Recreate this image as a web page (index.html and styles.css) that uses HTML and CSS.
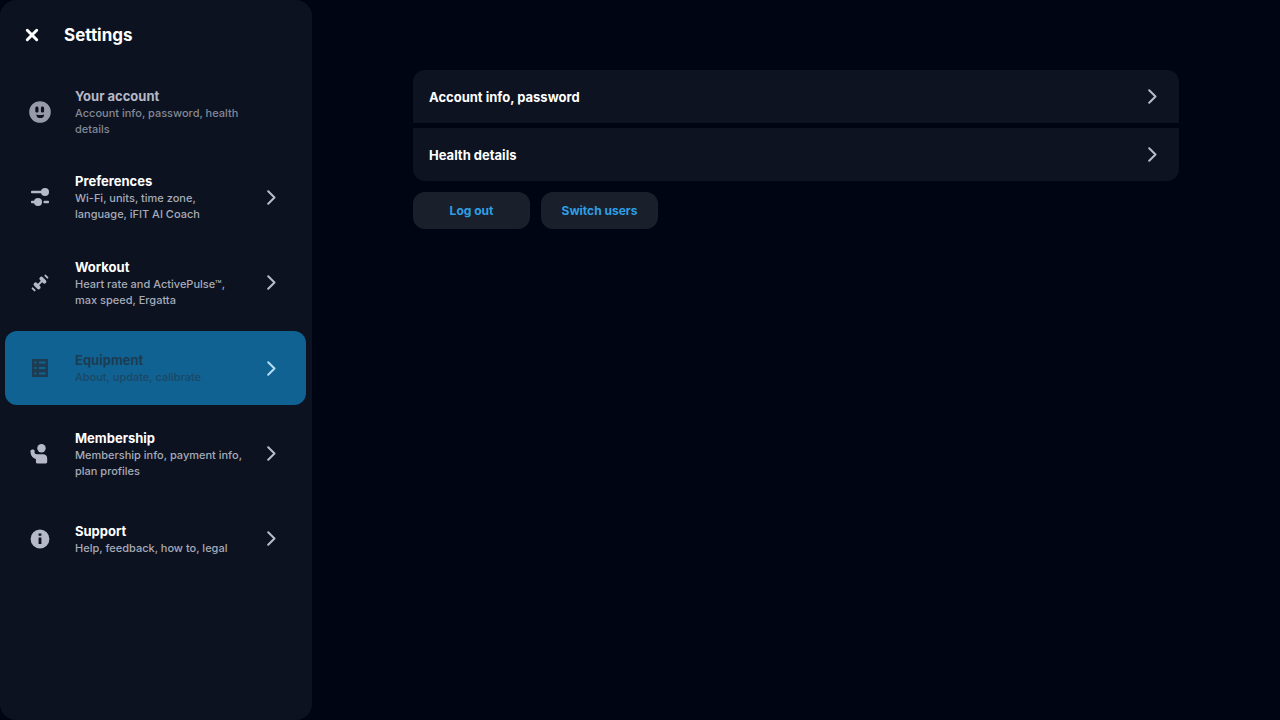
FILE: index.html
```html
<!DOCTYPE html>
<html lang="en">
<head>
<meta charset="utf-8">
<meta name="viewport" content="width=device-width, initial-scale=1">
<title>Settings</title>
<link rel="stylesheet" href="styles.css">
</head>
<body>
<div class="app">
  <aside class="sidebar">
    <header class="sidebar-header">
      <button class="close" type="button" aria-label="Close">
        <svg width="14" height="14" viewBox="0 0 14 14"><path d="M2.3 2.3 11.7 11.7M11.7 2.3 2.3 11.7" fill="none" stroke="currentColor" stroke-width="3" stroke-linecap="round"/></svg>
      </button>
      <h1 class="title">Settings</h1>
    </header>
    <nav class="menu">
      <a class="item item-current" href="#account" aria-current="page">
        <svg class="icon" viewBox="0 0 24 24"><path fill="currentColor" fill-rule="evenodd" d="M12 1.2a10.8 10.8 0 1 0 0 21.6 10.8 10.8 0 0 0 0-21.6ZM8.9 6.6c.9 0 1.6.7 1.6 1.600v2.800c0 .9-.7 1.600-1.600 1.600s-1.600-.7-1.600-1.600V8.200c0-.9.7-1.600 1.600-1.600Zm5.600 0c.9 0 1.600.7 1.600 1.600v2.800c0 .9-.7 1.600-1.600 1.600s-1.600-.7-1.600-1.600V8.200c0-.9.7-1.600 1.600-1.600ZM8.400 14.400c2.400.8 5.200.8 7.700 0 .2 2.300-1.500 3.700-3.800 3.700s-4.100-1.400-3.900-3.700Z"/></svg>
        <span class="text"><span class="name">Your account</span><span class="note">Account info, password, health details</span></span>
      </a>
      <a class="item" href="#preferences">
        <svg class="icon" viewBox="0 0 24 24"><g fill="currentColor"><rect x="3" y="5.700" width="13" height="2.600" rx=".8"/><circle cx="17" cy="7" r="4"/><rect x="3" y="15.700" width="8" height="2.600" rx=".8"/><circle cx="10" cy="17" r="4"/><rect x="15.500" y="15.700" width="5.500" height="2.600" rx=".8"/></g></svg>
        <span class="text"><span class="name">Preferences</span><span class="note">Wi-Fi, units, time zone, language, iFIT AI Coach</span></span>
        <svg class="chevron" viewBox="0 0 9 15"><path d="M1.200 1.200 7.500 7.500 1.200 13.800"/></svg>
      </a>
      <a class="item" href="#workout">
        <svg class="icon" viewBox="0 0 24 24"><g fill="none" stroke="currentColor" stroke-linecap="round"><path stroke-width="1.800" d="M9 15 15 9"/><path stroke-width="4" d="m7.600 13.400 3 3M13.400 7.600l3 3"/><path stroke-width="2" d="m4.600 17.400 2 2M17.400 4.600l2 2"/></g></svg>
        <span class="text"><span class="name">Workout</span><span class="note">Heart rate and ActivePulse™, max speed, Ergatta</span></span>
        <svg class="chevron" viewBox="0 0 9 15"><path d="M1.200 1.200 7.500 7.500 1.200 13.800"/></svg>
      </a>
      <a class="item item-pressed" href="#equipment">
        <svg class="icon" viewBox="0 0 24 24"><path fill="currentColor" fill-rule="evenodd" d="M4 3h16v18H4ZM6.500 5.500v2h2v-2Zm4.500 0v2h6.500v-2ZM6.500 11v2h2v-2Zm4.500 0v2h6.500v-2ZM6.500 16.500v2h2v-2Zm4.500 0v2h6.500v-2Z"/></svg>
        <span class="text"><span class="name">Equipment</span><span class="note">About, update, calibrate</span></span>
        <svg class="chevron" viewBox="0 0 9 15"><path d="M1.200 1.200 7.500 7.500 1.200 13.800"/></svg>
      </a>
      <a class="item" href="#membership">
        <svg class="icon" viewBox="0 0 24 24"><g fill="currentColor"><circle cx="13.500" cy="6.200" r="4.200"/><path d="M2.500 9.300c0-1.100.7-1.800 1.700-1.800h1c1 0 1.600.8 1.400 1.700-.4 1.800.5 3.100 2.400 3.100H15c2.300 0 4.200 1.600 4.200 3.900v3.900c0 .8-.6 1.300-1.300 1.300H9.200c-.8 0-1.300-.6-1.300-1.300v-3C4 15.800 2.500 13 2.500 9.300Z"/></g></svg>
        <span class="text"><span class="name">Membership</span><span class="note">Membership info, payment info, plan profiles</span></span>
        <svg class="chevron" viewBox="0 0 9 15"><path d="M1.200 1.200 7.500 7.500 1.200 13.800"/></svg>
      </a>
      <a class="item" href="#support">
        <svg class="icon" viewBox="0 0 24 24"><path fill="currentColor" fill-rule="evenodd" d="M12 2.600a9.400 9.400 0 1 0 0 18.800 9.400 9.400 0 0 0 0-18.800ZM10.600 6.500h2.800v2.300h-2.800Zm0 4h2.800v6.600h-2.800Z"/></svg>
        <span class="text"><span class="name">Support</span><span class="note">Help, feedback, how to, legal</span></span>
        <svg class="chevron" viewBox="0 0 9 15"><path d="M1.200 1.200 7.500 7.500 1.200 13.800"/></svg>
      </a>
    </nav>
  </aside>
  <main class="content">
    <div class="list">
      <a class="row" href="#info">Account info, password<svg class="chevron" viewBox="0 0 9 15"><path d="M1.200 1.200 7.500 7.500 1.200 13.800"/></svg></a>
      <a class="row" href="#health">Health details<svg class="chevron" viewBox="0 0 9 15"><path d="M1.200 1.200 7.500 7.500 1.200 13.800"/></svg></a>
    </div>
    <div class="actions">
      <button class="action" type="button">Log out</button>
      <button class="action" type="button">Switch users</button>
    </div>
  </main>
</div>
</body>
</html>
```
FILE: styles.css
```css
* { box-sizing: border-box; }

body {
  margin: 0;
  background: #000513;
  color: #fff;
  font-family: Inter, "Liberation Sans", sans-serif;
}

a { color: inherit; text-decoration: none; }
button { border: 0; font: inherit; cursor: pointer; }

.app {
  display: grid;
  grid-template-columns: 312px 1fr;
  min-height: 100vh;
}

.sidebar {
  display: flex;
  flex-direction: column;
  background: #0c1220;
  border-radius: 16px;
}

.sidebar-header {
  display: flex;
  align-items: center;
  gap: 24px;
  padding: 20px 24px 0;
  height: 50px;
}

.close {
  display: grid;
  place-items: center;
  width: 16px;
  height: 16px;
  padding: 0;
  background: none;
  color: #fff;
}

.title {
  margin: 0;
  font-size: 17px;
  line-height: 24px;
  font-weight: 700;
}

.menu {
  flex: 1;
  display: flex;
  flex-direction: column;
  justify-content: space-between;
  padding: 25px 6px 144px 5px;
}

.item {
  display: grid;
  grid-template-columns: 24px 169px 9px;
  justify-content: start;
  align-items: center;
  min-height: 74px;
  padding: 0 23px;
  border-radius: 12px;
  column-gap: 23px;
}

.icon { width: 24px; height: 24px; color: #b6bac7; }

.text { display: grid; }
.name { font-size: 13px; line-height: 18px; font-weight: 700; }
.note { font-size: 11px; line-height: 16px; font-weight: 500; color: #a7abb8; }

.chevron {
  width: 9px;
  height: 15px;
  fill: none;
  stroke: #b8bccb;
  stroke-width: 2;
  stroke-linecap: round;
  stroke-linejoin: round;
}

.item-current .icon { color: #979ba8; }
.item-current .name { color: #b5b9c6; }
.item-current .note { color: #838895; }

.item-pressed { background: #106292; }
.item-pressed .icon,
.item-pressed .name { color: #1d3c52; }
.item-pressed .note { color: #1c4864; }
.item-pressed .chevron { stroke: #b5dcf5; }

.content { padding: 70px 101px; }

.list { display: grid; gap: 5px; }

.row {
  display: flex;
  align-items: center;
  justify-content: space-between;
  min-height: 53px;
  padding: 0 22px 0 16px;
  background: #0d1321;
  font-size: 13px;
  line-height: 18px;
  font-weight: 700;
}

.row:first-child { border-radius: 12px 12px 0 0; }
.row:last-child { border-radius: 0 0 12px 12px; }

.actions { display: flex; gap: 11px; margin-top: 11px; }

.action {
  width: 117px;
  height: 37px;
  padding: 0;
  border-radius: 12px;
  background: #1a202b;
  color: #2d9fe4;
  font-size: 12px;
  font-weight: 700;
}
```
